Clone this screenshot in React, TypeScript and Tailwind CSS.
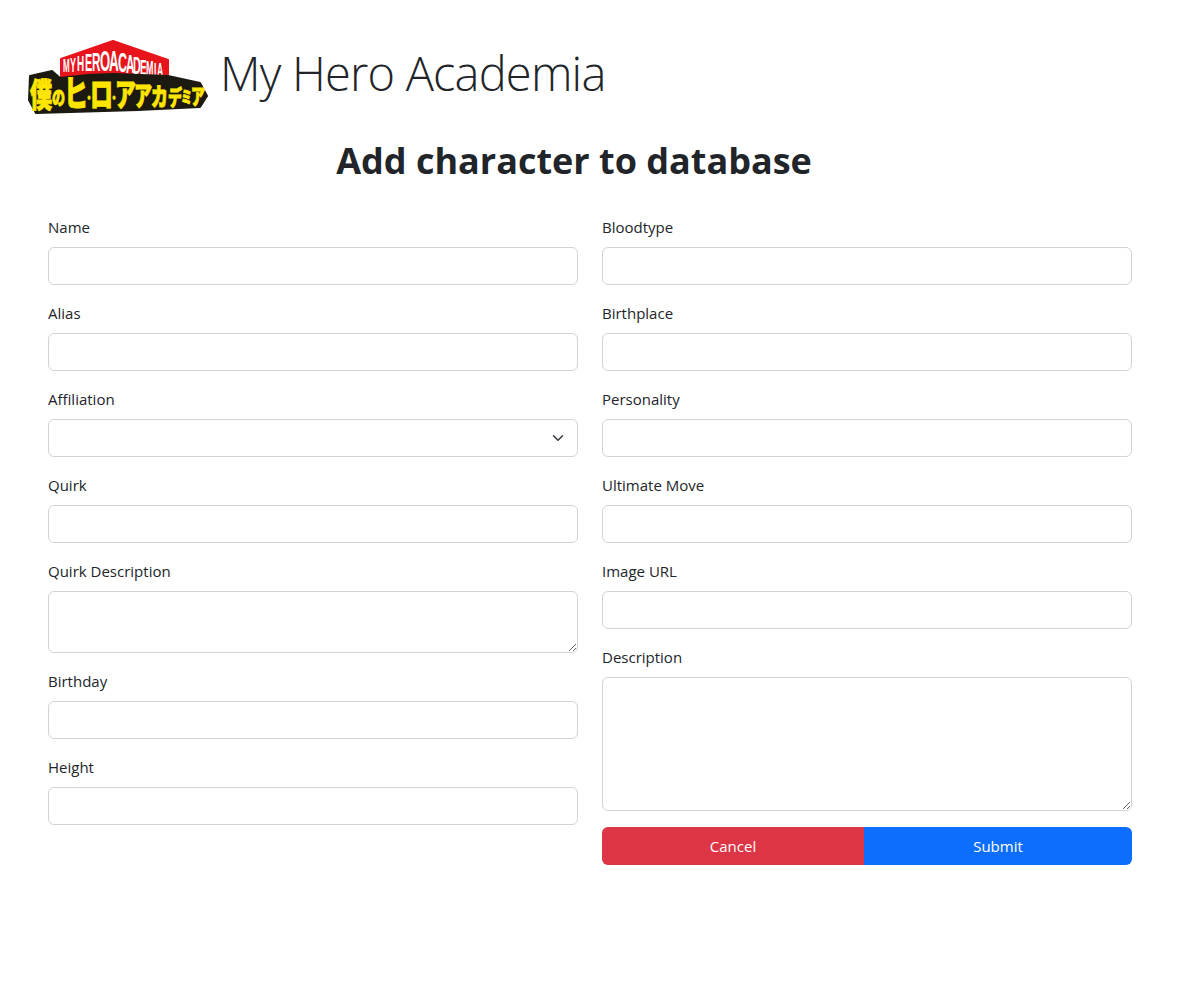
const inputClass =
  "block h-[38px] w-full rounded-md border border-[#ced4da] bg-white px-3 text-base text-[#212529] outline-none";

const bannerLetters = [
  ["M", 35, 32, 18], ["Y", 42, 32, 20], ["H", 49, 31, 22], ["E", 57, 31, 24], ["R", 64, 31, 26],
  ["O", 72, 31, 29], ["A", 81, 31, 30], ["C", 90, 32, 28], ["A", 98, 33, 26], ["D", 105, 34, 24],
  ["E", 112, 35, 22], ["M", 118, 35, 20], ["I", 126, 36, 19], ["A", 129, 36, 19],
] as const;

const kana = [
  ["僕", 2, 67, 22], ["の", 24, 65, 13], ["ヒ", 36, 67, 24], ["・", 57, 63, 8], ["ロ", 62, 67, 23],
  ["・", 82, 63, 8], ["ア", 87, 66, 21], ["ア", 106, 66, 18], ["カ", 123, 66, 17], ["デ", 140, 65, 14],
  ["ミ", 153, 63, 11], ["ア", 163, 64, 14],
] as const;

function Logo() {
  return (
    <svg width="180" height="74" viewBox="0 0 180 74" className="shrink-0">
      <path d="M33 19 L85 1 L140 20 L140 37 L33 37 Z" fill="#e8141c" stroke="#e8141c" strokeWidth="2" strokeLinejoin="round" />
      <g transform="scale(0.45 1)">
        <text fontFamily="'Liberation Sans', sans-serif" fontWeight="700" fill="#fff">
          {bannerLetters.map(([ch, x, y, size], i) => (
            <tspan key={i} x={x / 0.45} y={y} fontSize={size}>{ch}</tspan>
          ))}
        </text>
      </g>
      <path d="M2 36 L24 31 L32 38 L60 35 L85 34 L140 36 L172 43 L179 56 L172 67 L110 70 L8 73 L1 60 Z" fill="#1c1a10" stroke="#1c1a10" strokeWidth="2" strokeLinejoin="round" />
      <g transform="scale(1 1.5)">
        <text fontFamily="'Noto Sans CJK JP', sans-serif" fontWeight="900" fill="#ffe600" stroke="#ffe600" strokeWidth="0.6">
          {kana.map(([ch, x, y, size], i) => (
            <tspan key={i} x={x} y={y / 1.5} fontSize={size}>{ch}</tspan>
          ))}
        </text>
      </g>
    </svg>
  );
}

function Field({ label, children }: { label: string; children: React.ReactNode }) {
  return (
    <div className="mb-4">
      <label className="mb-2 block text-[15px] leading-6 text-[#212529]">{label}</label>
      {children}
    </div>
  );
}

function TextField({ label }: { label: string }) {
  return (
    <Field label={label}>
      <input type="text" className={inputClass} />
    </Field>
  );
}

export default function App() {
  return (
    <div className="min-h-[983px] bg-white font-['Open_Sans','Liberation_Sans',sans-serif] text-[#212529]">
      <header className="flex items-center gap-[12px] pl-7 pt-10">
        <Logo />
        <h1 className="pb-2 text-[47px] font-light leading-[64px] tracking-[-0.8px]">My Hero Academia</h1>
      </header>

      <h2 className="mt-[23px] pr-[42px] text-center text-[36px] font-bold leading-[48px]">Add character to database</h2>

      <form className="mt-[30px] grid w-[1132px] grid-cols-2 gap-x-6 pl-12">
        <div>
          <TextField label="Name" />
          <TextField label="Alias" />
          <Field label="Affiliation">
            <div className="relative">
              <select className={`${inputClass} appearance-none`} />
              <svg viewBox="0 0 16 16" className="pointer-events-none absolute right-3 top-[13px] h-3 w-4">
                <path d="m2 5 6 6 6-6" fill="none" stroke="#343a40" strokeWidth="2" strokeLinecap="round" strokeLinejoin="round" />
              </svg>
            </div>
          </Field>
          <TextField label="Quirk" />
          <Field label="Quirk Description">
            <textarea className="block h-[62px] w-full rounded-md border border-[#ced4da] bg-white px-3 py-1.5 outline-none" />
          </Field>
          <TextField label="Birthday" />
          <TextField label="Height" />
        </div>

        <div>
          <TextField label="Bloodtype" />
          <TextField label="Birthplace" />
          <TextField label="Personality" />
          <TextField label="Ultimate Move" />
          <TextField label="Image URL" />
          <Field label="Description">
            <textarea className="block h-[134px] w-full rounded-md border border-[#ced4da] bg-white px-3 py-1.5 outline-none" />
          </Field>
          <div className="flex h-[38px] overflow-hidden rounded-md text-[15px] text-white">
            <button type="button" className="w-[262px] bg-[#dc3545]">Cancel</button>
            <button type="submit" className="flex-1 bg-[#0d6efd]">Submit</button>
          </div>
        </div>
      </form>
    </div>
  );
}
